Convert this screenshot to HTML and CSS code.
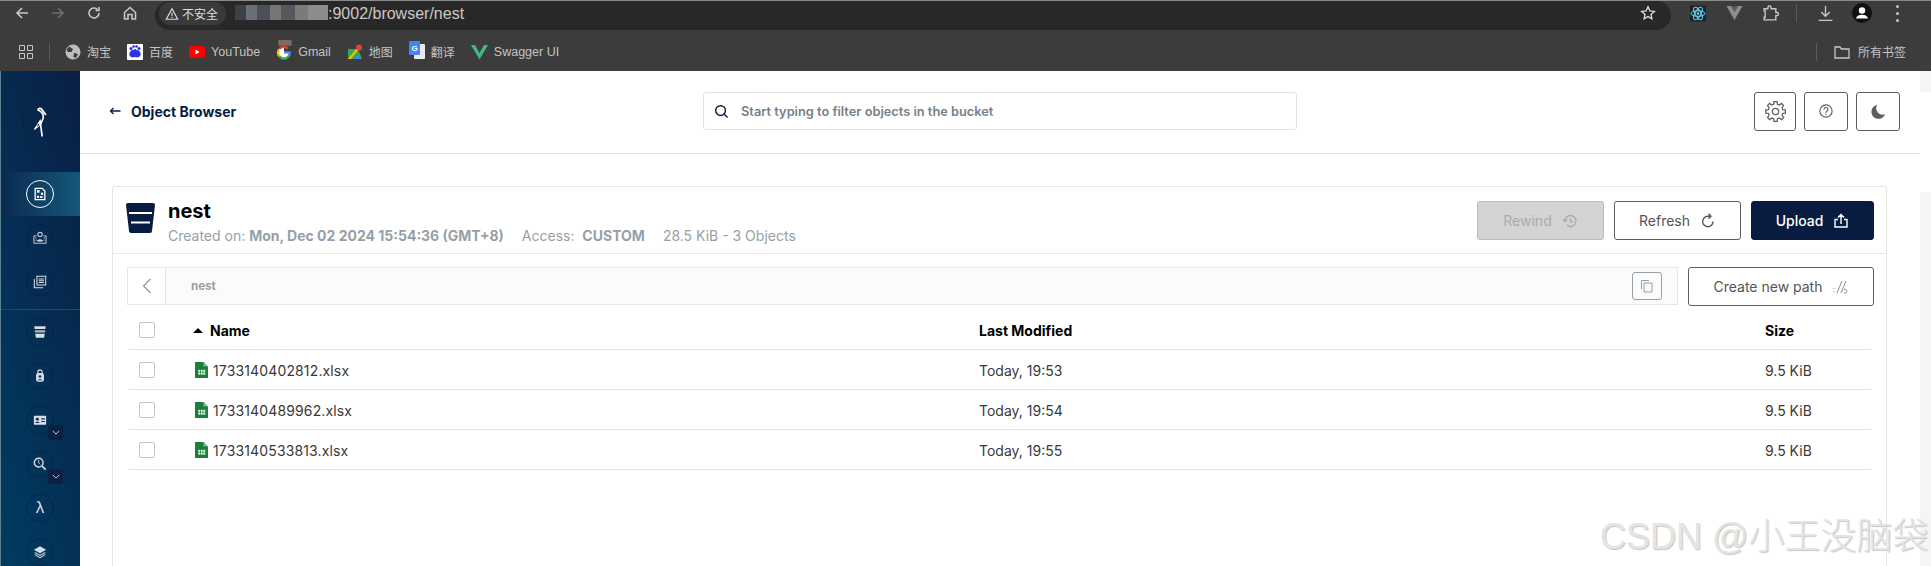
FILE: index.html
```html
<!DOCTYPE html>
<html lang="zh-CN">
<head>
<meta charset="utf-8">
<title>nest - Object Browser</title>
<link rel="stylesheet" href="styles.css">
</head>
<body>
<div class="chrome">
  <div class="toolbar">
    <svg class="nav nav-back" viewBox="0 0 16 16"><path d="M14 8H3M8 3 3 8l5 5"/></svg>
    <svg class="nav nav-off" viewBox="0 0 16 16"><path d="M2 8h11M8 3l5 5-5 5"/></svg>
    <svg class="nav" viewBox="0 0 16 16"><path d="M13 8a5 5 0 1 1-1.6-3.7M13 2v3.5H9.5"/></svg>
    <svg class="nav" viewBox="0 0 16 16"><path d="M2.5 7.5 8 2.5l5.500 5V14H10V9.500H6V14H2.500z"/></svg>
    <div class="address">
      <div class="secure"><svg class="warn" viewBox="0 0 16 16"><path d="M8 2 1.500 14h13zM8 6.500v4M8 11.500v1.200"/></svg><span>不安全</span></div>
      <div class="blur"></div>
      <span class="url">:9002/browser/nest</span>
      <svg class="star" viewBox="0 0 16 16"><path d="m8 1.800 1.900 4.100 4.400.5-3.300 3 .9 4.400L8 11.600 4.100 13.800l.9-4.400-3.300-3 4.400-.5z"/></svg>
    </div>
    <div class="ext">
      <svg class="ext-react" viewBox="0 0 16 16"><rect width="16" height="16" fill="#20232a"/><g fill="none" stroke="#61dafb"><ellipse cx="8" cy="8" rx="7" ry="2.800"/><ellipse cx="8" cy="8" rx="7" ry="2.800" transform="rotate(60 8 8)"/><ellipse cx="8" cy="8" rx="7" ry="2.800" transform="rotate(120 8 8)"/></g><circle cx="8" cy="8" r="1.300" fill="#61dafb"/></svg>
      <svg class="ext-vue" viewBox="0 0 16 16"><path d="M0 1h4.500L8 7l3.500-6H16L8 15z" fill="#8d8d8d"/><path d="M4.500 1H7l1 2 1-2h2.500L8 7z" fill="#5f5f5f"/></svg>
      <svg class="ext-icon" viewBox="0 0 16 16"><path d="M2 3.500h3.500V2.500a1.500 1.500 0 0 1 3 0v1H13V7h1a1.500 1.500 0 0 1 0 3h-1v4H2v-2.500h1V5.500H2z"/></svg>
      <i class="ext-sep"></i>
      <svg class="ext-icon" viewBox="0 0 16 16"><path d="M8 1v9M4 6.500 8 10.500l4-4M1.500 14.500h13"/></svg>
      <svg class="avatar" viewBox="0 0 20 20"><circle cx="10" cy="10" r="10" fill="#111"/><circle cx="10" cy="7.500" r="3.200" fill="#fff"/><path d="M3.800 15.500c1-3 3.500-3.800 6.200-3.800s5.200.8 6.200 3.800z" fill="#fff"/></svg>
      <div class="dots"><i></i><i></i><i></i></div>
    </div>
  </div>
  <div class="bookmarks">
    <svg class="bm-apps" viewBox="0 0 14 14"><path d="M.5.5h5v5h-5zM8.500.5h5v5h-5zM.5 8.500h5v5h-5zM8.500 8.500h5v5h-5z"/></svg>
    <i class="bm-sep"></i>
    <div class="bm bm-first"><svg viewBox="0 0 16 16"><circle cx="8" cy="8" r="7.500" fill="#bdbdbd"/><path d="M4 2.500 8 5 6.500 8 3 8 1.500 6zM9 9l4 1-2 4-2.500-1z" fill="#3c3c3c"/></svg><span>淘宝</span></div>
    <div class="bm"><svg viewBox="0 0 16 16"><rect width="16" height="16" rx="1" fill="#fff"/><path d="M3 8c2-3 2-1 5-3 3 2 3 0 5 3 2 4-1 6-5 5-4 1-7-1-5-5z" fill="#2932e1"/><circle cx="4" cy="4.500" r="1.500" fill="#2932e1"/><circle cx="12" cy="4.500" r="1.500" fill="#2932e1"/><circle cx="6.500" cy="2.500" r="1.300" fill="#2932e1"/><circle cx="9.500" cy="2.500" r="1.300" fill="#2932e1"/></svg><span>百度</span></div>
    <div class="bm"><svg viewBox="0 0 16 16"><rect y="2" width="16" height="12" rx="3" fill="#f00"/><path d="m6.500 5.500 4 2.500-4 2.500z" fill="#fff"/></svg><span class="bm-en">YouTube</span></div>
    <div class="bm"><svg class="bm-tall" viewBox="0 0 16 21"><rect x="2" width="14" height="6" fill="#7d6a63"/><path d="M8 7a6.500 6.500 0 1 0 6.500 6.500H8" fill="#fff"/><path d="M3.500 9a6 6 0 0 1 8.500 0" stroke="#ea4335" stroke-width="2.500" fill="none"/><path d="M3 10a6 6 0 0 0 0 7" stroke="#fbbc05" stroke-width="2.500" fill="none"/><path d="M3 17a6 6 0 0 0 10 0" stroke="#34a853" stroke-width="2.500" fill="none"/><path d="M13 17a6 6 0 0 0 1-4H8" stroke="#4285f4" stroke-width="2.500" fill="none"/></svg><span class="bm-en">Gmail</span></div>
    <div class="bm"><svg viewBox="0 0 16 16"><path d="M1 5h10l4 10H1z" fill="#34a853"/><path d="M1 15 9 5h3L4 15z" fill="#fbbc05"/><path d="M7 15l3-4 4 4z" fill="#4285f4"/><circle cx="12" cy="3.500" r="3" fill="#ea4335"/></svg><span>地图</span></div>
    <div class="bm"><svg class="bm-tall" viewBox="0 0 16 18"><rect x="5" y="3" width="11" height="15" rx="1" fill="#e8eaed"/><rect width="11" height="14" rx="1" fill="#4285f4"/><text x="2.500" y="10" class="gt">G</text></svg><span>翻译</span></div>
    <div class="bm bm-wide"><svg viewBox="0 0 17 16"><path d="M0 1h4l4.500 8L13 1h4L8.500 15.500z" fill="#41b883"/></svg><span class="bm-en">Swagger UI</span></div>
    <div class="bm-right">
      <i class="bm-sep"></i>
      <svg class="bm-folder" viewBox="0 0 16 14"><path d="M1 2h5l1.500 2H15v9H1z"/></svg>
      <span class="bm-all">所有书签</span>
    </div>
  </div>
</div>

<div class="app">
  <nav class="sidebar">
    <div class="logo"><div class="nav-circle logo-circle"><svg viewBox="0 0 14 30"><path d="M13 8 8.500 2C7.500 1 5.500 1.200 5 3c1.500.6 3 1.300 4.500 3.500 1 2 1 5-.5 7.500l-1.500 3 1.700 12.500" fill="none" stroke="#fff" stroke-width="1.700" stroke-linejoin="round"/><path d="M7.500 12 1 22l.5 1 7-5.500z" fill="#fff"/><path d="M5.500 16.500 3.500 20l3-2z" fill="#0a2a50"/></svg></div></div>
    <div class="side-group">
      <div class="side-item active"><div class="nav-circle on"><svg viewBox="0 0 16 16"><path d="M2.500 1.500h8l3 3v10h-11z" fill="none" stroke="#fff" stroke-width="1.500"/><rect x="4.500" y="3.500" width="3" height="3" fill="#fff"/><rect x="9" y="6.500" width="2.500" height="2.500" fill="#fff"/><rect x="4.500" y="10" width="2.500" height="2.500" fill="#fff"/><rect x="8" y="10.500" width="3" height="2" fill="#fff"/></svg></div></div>
      <div class="side-item"><div class="nav-circle"><svg viewBox="0 0 16 16"><path d="M1 5.500h3M12 5.500h3v8.500H1V5.500" fill="none" stroke="#d5dde6"/><circle cx="8" cy="4" r="2.500" fill="none" stroke="#d5dde6" stroke-width="1.200"/><path d="M4.500 12c.5-3.500 6.500-3.500 7 0z" fill="#d5dde6"/><path d="M2.500 8h1.500M2.500 10.500h1.500M12 8h1.500M12 10.500h1.500" stroke="#d5dde6"/></svg></div></div>
      <div class="side-item"><div class="nav-circle"><svg viewBox="0 0 16 16"><path d="M4.500 1.500h10v10h-10zM1.500 4.500v10h10M6.500 4.500h6M6.500 6.500h6M6.500 8.500h6" fill="none" stroke="#d5dde6" stroke-width="1.200"/></svg></div></div>
    </div>
    <div class="side-group side-divided">
      <div class="side-item"><div class="nav-circle"><svg viewBox="0 0 16 16"><path d="M1.500 1.500h13l-.4 3H1.900z" fill="#d5dde6"/><path d="M2 6h12l-.3 2.500H2.300z" fill="#aeb9c7"/><path d="M2.500 10h11l-.8 4.500H3.300z" fill="#d5dde6"/></svg></div></div>
      <div class="side-item"><div class="nav-circle"><svg viewBox="0 0 16 16"><path d="M5.500 5V3.500a2.500 2.500 0 0 1 5 0V5" fill="none" stroke="#d5dde6" stroke-width="1.300"/><rect x="3.500" y="4.500" width="9" height="10" rx="2.500" fill="#d5dde6"/><circle cx="8" cy="8.500" r="1.500" fill="#0a2a50"/><path d="M5.500 12.800c.6-1.600 4.400-1.600 5 0z" fill="#0a2a50"/></svg></div></div>
      <div class="side-item"><div class="nav-circle"><svg viewBox="0 0 16 16"><rect x="1" y="3" width="14" height="10.500" rx="1" fill="#d5dde6"/><circle cx="5" cy="7" r="1.700" fill="#0a2a50"/><path d="M2.500 11.500c.5-2 4.500-2 5 0zM9.500 6h4v1.300h-4zM9.500 9h4v1.300h-4z" fill="#0a2a50"/></svg></div><div class="chev"><svg viewBox="0 0 10 6"><path d="m1 1 4 4 4-4"/></svg></div></div>
      <div class="side-item"><div class="nav-circle"><svg viewBox="0 0 16 16"><circle cx="6.500" cy="6.500" r="5" fill="none" stroke="#d5dde6" stroke-width="1.600"/><path d="M10 10l4.500 4.500" stroke="#d5dde6" stroke-width="2"/><path d="M6.500 3.500v3l2 2" stroke="#d5dde6" fill="none"/></svg></div><div class="chev"><svg viewBox="0 0 10 6"><path d="m1 1 4 4 4-4"/></svg></div></div>
      <div class="side-item"><div class="nav-circle"><span class="lambda">λ</span></div></div>
      <div class="side-item"><div class="nav-circle"><svg viewBox="0 0 16 16"><path d="M8 1.500 15 5.500 8 9.500 1 5.500z" fill="#d5dde6"/><path d="M2 8.500l6 3.400 6-3.400M2 11l6 3.400 6-3.400" fill="none" stroke="#d5dde6" stroke-width="1.200"/></svg></div></div>
    </div>
  </nav>

  <main class="main">
    <header class="head">
      <a class="crumb"><svg viewBox="0 0 12 8"><path d="M11.500 4H1.500M4.500 1 1.500 4l3 3"/></svg><span>Object Browser</span></a>
      <div class="search"><svg viewBox="0 0 16 16"><circle cx="7" cy="7" r="5.200"/><path d="m11 11 3.500 3.500"/></svg><span>Start typing to filter objects in the bucket</span></div>
      <div class="head-btns">
        <button class="icon-btn ib-gear"><svg viewBox="0 0 20 20"><circle cx="10" cy="10" r="3"/><path d="M8.200 3.100 8.500.6h3l.3 2.500 1.800.8 2.100-1.600 2 2.100-1.500 2 .7 1.800 2.500.3v3l-2.500.3-.7 1.800 1.600 2.100-2.100 2-2-1.500-1.800.7-.3 2.500h-3l-.3-2.500-1.800-.7-2.100 1.500-2-2 1.500-2.100-.7-1.800-2.500-.3v-3l2.500-.3.7-1.800-1.500-2 2-2.100 2.100 1.600z"/></svg></button>
        <button class="icon-btn ib-help"><svg viewBox="0 0 16 16"><circle cx="8" cy="8" r="7"/><path d="M5.800 6.200a2.200 2.200 0 1 1 3.400 1.900c-.8.500-1.200.9-1.200 1.900M8 11.200v1.300"/></svg></button>
        <button class="icon-btn ib-moon"><svg viewBox="0 0 16 16"><path class="moon" d="M6.500 1a7.500 7.500 0 1 0 8.500 10A7 7 0 0 1 6.500 1z"/></svg></button>
      </div>
    </header>

    <section class="card">
      <div class="card-head">
        <svg class="bucket" viewBox="0 0 29 30"><path d="M2 0h25q2 0 2 2l-3 26q0 2-2 2H5q-2 0-2-2L0 2q0-2 2-2z" fill="#081c42"/><path d="M3 10h23" stroke="#fff" stroke-width="2"/><path d="M5 19.500h19" stroke="#fff" stroke-width="2"/></svg>
        <div class="titles">
          <h1>nest</h1>
          <div class="meta">
            <span>Created on: <b>Mon, Dec 02 2024 15:54:36 (GMT+8)</b></span>
            <span>Access:&nbsp; <b>CUSTOM</b></span>
            <span>28.5 KiB - 3 Objects</span>
          </div>
        </div>
        <div class="actions">
          <button class="btn btn-off">Rewind <svg viewBox="0 0 16 16"><path d="M3 8a5.500 5.500 0 1 1 1.700 4M1 6l2 2.500L5.500 6.500M8.500 5v3.500l2.500 1"/></svg></button>
          <button class="btn btn-line">Refresh <svg viewBox="0 0 16 16"><path d="M13 8.500A5.200 5.200 0 1 1 8 3.300h2M8.500 .8 11 3.300 8.500 5.800"/></svg></button>
          <button class="btn btn-fill">Upload <svg viewBox="0 0 16 16"><path d="M8 11V2M5 4.500l3-3 3 3M5 6.500H2v7.500h12V6.500h-3"/></svg></button>
        </div>
      </div>
      <div class="card-body">
        <div class="pathrow">
          <div class="pathbar">
            <div class="back"><svg viewBox="0 0 10 16"><path d="M8.500 1 1.500 8l7 7"/></svg></div>
            <span class="pathname">nest</span>
            <div class="copy"><svg viewBox="0 0 14 14"><path d="M1.500 10V1.500H9M4 4h8v9H4z"/></svg></div>
          </div>
          <button class="btn btn-line btn-path">Create new path <svg class="pathicon" viewBox="0 0 16 14"><path d="M2 8v1M2 11v1M5 13 10 1M9 13l5-12M12 9.500a2 2 0 1 1 0 3.500"/></svg></button>
        </div>
        <div class="row row-head">
          <span class="check"></span>
          <span class="name-h"><i class="sort"></i>Name</span>
          <span>Last Modified</span>
          <span>Size</span>
        </div>
        <div class="row">
          <span class="check"></span>
          <span class="name"><svg viewBox="0 0 13 16"><path d="M0 0h8.500L13 4.500V16H0z" fill="#188038"/><path d="M8.500 0 13 4.500H8.500z" fill="#7dbb8f"/><path d="M3 7.500h7.500v5.500H3zM3 10.200h7.500M5.500 7.500V13M8 7.500V13" fill="#fff" stroke="#188038" stroke-width=".7"/></svg>1733140402812.xlsx</span>
          <span>Today, 19:53</span>
          <span>9.5 KiB</span>
        </div>
        <div class="row">
          <span class="check"></span>
          <span class="name"><svg viewBox="0 0 13 16"><path d="M0 0h8.500L13 4.500V16H0z" fill="#188038"/><path d="M8.500 0 13 4.500H8.500z" fill="#7dbb8f"/><path d="M3 7.500h7.500v5.500H3zM3 10.200h7.500M5.500 7.500V13M8 7.500V13" fill="#fff" stroke="#188038" stroke-width=".7"/></svg>1733140489962.xlsx</span>
          <span>Today, 19:54</span>
          <span>9.5 KiB</span>
        </div>
        <div class="row">
          <span class="check"></span>
          <span class="name"><svg viewBox="0 0 13 16"><path d="M0 0h8.500L13 4.500V16H0z" fill="#188038"/><path d="M8.500 0 13 4.500H8.500z" fill="#7dbb8f"/><path d="M3 7.500h7.500v5.500H3zM3 10.200h7.500M5.500 7.500V13M8 7.500V13" fill="#fff" stroke="#188038" stroke-width=".7"/></svg>1733140533813.xlsx</span>
          <span>Today, 19:55</span>
          <span>9.5 KiB</span>
        </div>
      </div>
    </section>
  </main>

  <aside class="gutter"><div class="g-top"></div><div class="g-gap"></div><div class="g-bottom"></div></aside>
</div>

<div class="watermark">CSDN @小王没脑袋</div>
</body>
</html>
```
FILE: styles.css
```css
* { box-sizing: border-box; }
html, body { margin: 0; height: 566px; overflow: hidden; background: #fff; }
body { font-family: Inter, "Noto Sans CJK SC", sans-serif; font-size: 14px; color: #393939; position: relative; }
i { display: block; font-style: normal; }

/* browser chrome */
.chrome { height: 71px; background: #3c3c3c; font-family: "Noto Sans CJK SC", "Liberation Sans", sans-serif; border-top: 1px solid #8a8a8a; }
.toolbar { height: 31px; display: flex; align-items: flex-start; padding-left: 14px; }
.nav { width: 16px; height: 16px; margin: 4px 20px 0 0; fill: none; stroke: #c7c7c7; stroke-width: 1.6; flex: none; }
.nav-off { stroke: #6e6e6e; }
.address { width: 1516px; height: 29px; margin-left: -3px; background: #282828; border-radius: 15px; display: flex; align-items: center; padding-left: 4px; position: relative; flex: none; }
.secure { width: 67px; height: 23px; margin-top: -4px; border-radius: 12px; background: #3a3a3a; display: flex; align-items: center; padding-left: 6px; gap: 3px; color: #ddd; font-size: 12px; }
.warn { width: 14px; height: 14px; fill: none; stroke: #ddd; stroke-width: 1.300; }
.blur { width: 93px; height: 15px; margin: -6px 0 0 9px; background: linear-gradient(90deg, #3c4048 0 12%, #6b6f76 12% 24%, #4c5058 24% 38%, #767676 38% 50%, #55595f 50% 64%, #7b7b7b 64% 78%, #8c8c8c 78% 100%); }
.url { color: #c9c9c9; font-size: 16px; margin-top: -4px; font-family: "Liberation Sans", sans-serif; }
.star { position: absolute; right: 15px; top: 4px; width: 16px; height: 16px; fill: none; stroke: #ddd; stroke-width: 1.300; }
.ext { display: flex; align-items: center; height: 24px; flex: none; margin-left: 19px; }
.ext svg { flex: none; }
.ext-react { width: 16px; height: 17px; }
.ext-vue { width: 17px; height: 16px; margin-left: 20px; }
.ext-icon { width: 17px; height: 17px; fill: none; stroke: #c7c7c7; stroke-width: 1.300; margin-left: 19px; }
.ext-sep { width: 1px; height: 18px; background: #5a5a5a; margin-left: 17px; }
.ext-sep + .ext-icon { margin-left: 20px; }
.avatar { width: 20px; height: 24px; margin-left: 18px; }
.dots { margin-left: 24px; display: flex; flex-direction: column; gap: 4px; }
.dots i { width: 3px; height: 3px; border-radius: 50%; background: #c7c7c7; }

.bookmarks { height: 39px; display: flex; align-items: center; padding: 0 25px 0 19px; font-size: 12px; color: #c4c4c4; }
.bm-apps { width: 14px; height: 14px; fill: none; stroke: #c7c7c7; flex: none; }
.bm-sep { width: 1px; height: 18px; background: #5c5c5c; margin-left: 16px; flex: none; }
.bm { display: flex; align-items: center; gap: 6px; margin-left: 16px; flex: none; }
.bm-first { margin-left: 15px; }
.bm svg { width: 16px; height: 16px; flex: none; }
.bm svg.bm-tall { height: 20px; margin-top: -4px; }
.bm-wide svg { width: 17px; }
.bm-en { font-family: "Liberation Sans", sans-serif; font-size: 12.500px; }
.gt { font: bold 8px "Liberation Sans", sans-serif; fill: #fff; }
.bm-right { margin-left: auto; display: flex; align-items: center; }
.bm-folder { width: 16px; height: 14px; fill: none; stroke: #c7c7c7; stroke-width: 1.300; margin-left: 17px; }
.bm-all { margin-left: 8px; font-size: 12px; }

/* app */
.app { display: flex; height: 495px; }
.sidebar { width: 80px; flex: none; background: linear-gradient(75deg, #003c60 0%, #0a1f45 100%); border-left: 1px solid #5f7f95; overflow: hidden; }
.logo { height: 101px; display: flex; align-items: center; justify-content: center; }
.nav-circle { width: 28px; height: 28px; border-radius: 50%; border: 1px solid rgba(8, 28, 66, .55); display: flex; align-items: center; justify-content: center; flex: none; }
.nav-circle svg { width: 14px; height: 14px; }
.logo-circle { width: 36px; height: 36px; margin-left: -1px; }
.logo-circle svg { width: 14px; height: 30px; }
.nav-circle.on { border: 1.500px solid #fff; }
.side-item { height: 44px; display: flex; align-items: center; justify-content: center; position: relative; padding-right: 1px; }
.active { background: linear-gradient(90deg, #0a2a50 0%, #15587a 100%); }
.side-divided { margin-top: 5px; border-top: 1px solid #1d4a6e; }
.chev { position: absolute; left: 47px; top: 27px; width: 15px; height: 15px; background: #0b2144; display: flex; align-items: center; justify-content: center; }
.chev svg { width: 8px; height: 5px; fill: none; stroke: #c5ced9; stroke-width: 1.200; }
.lambda { color: #d5dde6; font: 17px "Liberation Sans", sans-serif; }

.main { flex: 1; min-width: 0; display: flex; flex-direction: column; }
.head { height: 83px; border-bottom: 1px solid #e4e4e4; display: grid; grid-template-columns: 594px 594px 1fr; align-items: center; padding: 0 20px 2px 29px; flex: none; }
.crumb { display: flex; align-items: center; gap: 10px; color: #081c42; font-size: 14px; font-weight: 700; }
.crumb svg { width: 12px; height: 8px; fill: none; stroke: #081c42; stroke-width: 1.300; }
.search { height: 38px; border: 1px solid #e2e2e2; border-radius: 3px; display: flex; align-items: center; padding-left: 10px; gap: 12px; font-size: 12.800px; font-weight: 600; color: #767f8a; }
.search svg { width: 15px; height: 15px; fill: none; stroke: #081c42; stroke-width: 1.500; }
.head-btns { display: flex; justify-content: flex-end; gap: 8px; }
.icon-btn { width: 44px; height: 39px; padding: 0; background: #fff; border: 1px solid #5e5e5e; border-radius: 3px; display: flex; align-items: center; justify-content: center; }
.ib-gear { width: 42px; }
.icon-btn svg { width: 14px; height: 14px; fill: none; stroke: #5e5e5e; stroke-width: 1.300; }
.icon-btn.ib-gear svg { width: 21px; height: 21px; stroke-width: 1.200; }
.icon-btn.ib-moon svg { width: 15px; height: 15px; }
.moon { fill: #5e5e5e; stroke: none; }

.card { margin: 32px 33px 0 32px; border: 1px solid #e6e6e6; border-bottom: 0; border-radius: 3px 3px 0 0; flex: 1; display: flex; flex-direction: column; }
.card-head { height: 67px; border-bottom: 1px solid #e6e6e6; display: flex; padding: 15px 12px 0 13px; flex: none; }
.bucket { width: 29px; height: 30px; margin-top: 1px; flex: none; }
.titles { margin-left: 13px; }
h1 { margin: -3px 0 0; font-size: 20px; line-height: 24px; font-weight: 700; color: #000; }
.meta { display: flex; gap: 18px; margin-top: 4px; font-size: 14px; line-height: 18px; color: #969fa8; white-space: nowrap; }
.meta b { font-weight: 700; }
.actions { margin: -1px 0 0 auto; display: flex; gap: 10px; }
.btn { height: 39px; border-radius: 3px; display: flex; align-items: center; justify-content: center; gap: 10px; font: 400 14px Inter, sans-serif; padding: 0; }
.btn svg { width: 16px; height: 16px; fill: none; stroke: currentColor; stroke-width: 1.400; }
.actions .btn { width: 127px; }
.actions .btn-fill { width: 123px; }
.btn-off { background: #d3d4d3; border: 1px solid #bbb; color: #a9abac; }
.btn-line { background: #fff; border: 1px solid #5e5e5e; color: #555; }
.btn-fill { background: #081c42; border: 1px solid #081c42; color: #fff; font-weight: 500; }

.card-body { padding: 13px 12px 0 14px; flex: 1; }
.pathrow { display: flex; gap: 10px; align-items: flex-start; }
.pathbar { flex: 1; height: 38px; background: #fbfbfb; border: 1px solid #e6e6e6; display: flex; align-items: center; }
.back { width: 38px; height: 36px; background: #fff; border-right: 1px solid #e6e6e6; display: flex; align-items: center; justify-content: center; flex: none; }
.back svg { width: 10px; height: 16px; fill: none; stroke: #8e98a5; stroke-width: 1.300; }
.pathname { margin-left: 25px; font-size: 11.500px; font-weight: 700; color: #969fa8; }
.copy { margin-left: auto; margin-right: 15px; width: 30px; height: 28px; border: 1px solid #969fa8; border-radius: 3px; display: flex; align-items: center; justify-content: center; }
.copy svg { width: 14px; height: 14px; fill: none; stroke: #969fa8; }
.btn-path { width: 186px; }
.btn svg.pathicon { stroke-width: 1; stroke: #8a8a8a; }

.row { display: grid; grid-template-columns: 64px 786px 786px 1fr; align-items: center; height: 40px; margin-left: 2px; margin-right: 3px; border-bottom: 1px solid #e2e2e2; padding-top: 1px; color: #393939; }
.row-head { margin-top: 4px; font-weight: 700; font-size: 14px; color: #000; }
.check { width: 16px; height: 16px; margin-left: 10px; border: 1px solid #c4c4c4; border-radius: 2px; background: #fff; }
.name-h { display: flex; align-items: center; gap: 7px; }
.sort { width: 0; height: 0; border: 5px solid transparent; border-top: 0; border-bottom-color: #000; }
.name { display: flex; align-items: center; gap: 5px; margin-left: 2px; letter-spacing: .14px; }
.name svg { width: 13px; height: 16px; flex: none; }

.gutter { width: 11px; flex: none; display: flex; flex-direction: column; }
.g-top { height: 21px; background: #f5f5f5; }
.g-gap { height: 100px; background: #fff; }
.g-bottom { flex: 1; background: #f5f5f5; }

.watermark { position: absolute; left: 1600px; top: 507px; font: 300 36px "Liberation Sans", "Noto Sans CJK SC", sans-serif; color: #e4e4e4; text-shadow: 1px 1px 1px #c4c4c4; white-space: nowrap; }
```
